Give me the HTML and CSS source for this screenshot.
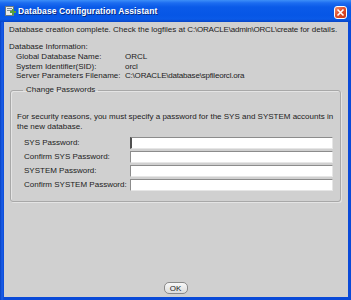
FILE: index.html
```html
<!DOCTYPE html>
<html lang="en">
<head>
  <meta charset="UTF-8">
  <title>Database Configuration Assistant</title>
  <link rel="stylesheet" href="styles.css">
</head>
<body>

<div class="window">
  <div class="titlebar">
    <svg class="app-icon" width="11" height="11" viewBox="0 0 11 11">
      <rect x="0.5" y="0.5" width="8" height="9" fill="#e8ecec" stroke="#6a7a80"/>
      <rect x="2" y="2" width="5" height="1" fill="#7a8a90"/>
      <rect x="2" y="4" width="5" height="1" fill="#7a8a90"/>
      <rect x="5" y="5" width="6" height="2" fill="#58a040"/>
      <rect x="7" y="3" width="2" height="6" fill="#58a040"/>
    </svg>
    <span class="title">Database Configuration Assistant</span>
    <span class="close-btn">
      <svg width="9" height="9" viewBox="0 0 9 9">
        <path d="M1.5 1.5 L7.5 7.5 M7.5 1.5 L1.5 7.5" stroke="#fff" stroke-width="1.6"/>
      </svg>
    </span>
  </div>

  <div class="content">
    <p class="msg">Database creation complete. Check the logfiles at <span class="path">C:\ORACLE\admin\ORCL\create</span> for details.</p>

    <div class="info">
      <div class="info-head">Database Information:</div>
      <div class="info-grid">
        <span>Global Database Name:</span><span>ORCL</span>
        <span>System Identifier(SID):</span><span>orcl</span>
        <span>Server Parameters Filename:</span><span class="path">C:\ORACLE\database\spfileorcl.ora</span>
      </div>
    </div>

    <fieldset class="group">
      <legend>Change Passwords</legend>
      <p class="note">For security reasons, you must specify a password for the SYS and SYSTEM accounts in<br>the new database.</p>
      <div class="pw-grid">
        <label>SYS Password:</label><input type="password" class="focused">
        <label>Confirm SYS Password:</label><input type="password">
        <label>SYSTEM Password:</label><input type="password">
        <label>Confirm SYSTEM Password:</label><input type="password">
      </div>
    </fieldset>

    <div class="buttons">
      <button class="ok-btn">OK</button>
    </div>
  </div>
</div>

</body>
</html>
```

FILE: styles.css
```css
body {
  margin: 0;
  font-family: "Liberation Sans", Arial, sans-serif;
  font-size: 8px;
  color: #1c1c1c;
  background: #fff;
}
.window {
  width: 351px;
  height: 300px;
  display: flex;
  flex-direction: column;
  background: linear-gradient(90deg, #0840c0 0, #1a5ee8 2px, #0a4ad8 4px);
  box-sizing: border-box;
}
.titlebar {
  height: 22px;
  flex: none;
  display: flex;
  align-items: center;
  padding: 0 3px 0 5px;
  background: linear-gradient(#3d8ff8 0, #1c6cf0 3px, #0a5ae8 7px, #0656e6 15px, #0a5ae8 19px, #0846c8 22px);
}
.app-icon {
  margin-right: 2px;
  margin-top: 1px;
}
.title {
  flex: 1;
  color: #fff;
  font-weight: bold;
  font-size: 8.5px;
  letter-spacing: 0.1px;
  text-shadow: 1px 1px 0 #0a2a80;
}
.close-btn {
  width: 13px;
  height: 13px;
  margin-top: 2px;
  margin-right: 1px;
  box-sizing: border-box;
  border: 1px solid #fff;
  border-radius: 3px;
  background: linear-gradient(135deg, #f09070 0, #e0502c 45%, #c83818 100%);
  display: flex;
  align-items: center;
  justify-content: center;
}
.content {
  flex: 1;
  margin: 0 3px 3px 4px;
  background: #d0d0d0;
  display: flex;
  flex-direction: column;
  padding: 3px 6px 3px 5px;
  line-height: 10px;
  white-space: nowrap;
}
.msg {
  margin: 0;
}
.path {
  letter-spacing: -0.2px;
}
.info {
  margin-top: 7px;
}
.info-grid {
  display: grid;
  grid-template-columns: 109px auto;
  padding-left: 7px;
  line-height: 9.7px;
}
.group {
  margin: 4px 1px 0 1px;
  padding: 17px 7px 10px 6px;
  border: 1px solid #a8a8a8;
  border-radius: 3px;
  box-shadow: inset 1px 1px 0 #e4e4e4, 1px 1px 0 #e4e4e4;
}
.group legend {
  padding: 0 3px;
  margin-left: 6px;
  line-height: 10px;
}
.note {
  margin: 0;
}
.pw-grid {
  display: grid;
  grid-template-columns: 106px 1fr;
  row-gap: 2px;
  margin-top: 5px;
  padding-left: 7px;
}
.pw-grid label {
  line-height: 12px;
}
.pw-grid input {
  height: 12px;
  margin: 0;
  padding: 0;
  box-sizing: border-box;
  border: 1px solid #8c8c8c;
  border-right-color: #e6e6e6;
  border-bottom-color: #e6e6e6;
  background: #fff;
}
.pw-grid input.focused {
  border-left: 2px solid #505050;
}
.buttons {
  margin-top: auto;
  display: flex;
  justify-content: center;
}
.ok-btn {
  width: 24px;
  height: 12px;
  padding: 0;
  font-family: "Liberation Sans", Arial, sans-serif;
  font-size: 8px;
  color: #1c1c1c;
  border: 1px solid #8a8a8a;
  border-radius: 5px;
  background: linear-gradient(#f8f8f8, #dcdcdc);
}
```
